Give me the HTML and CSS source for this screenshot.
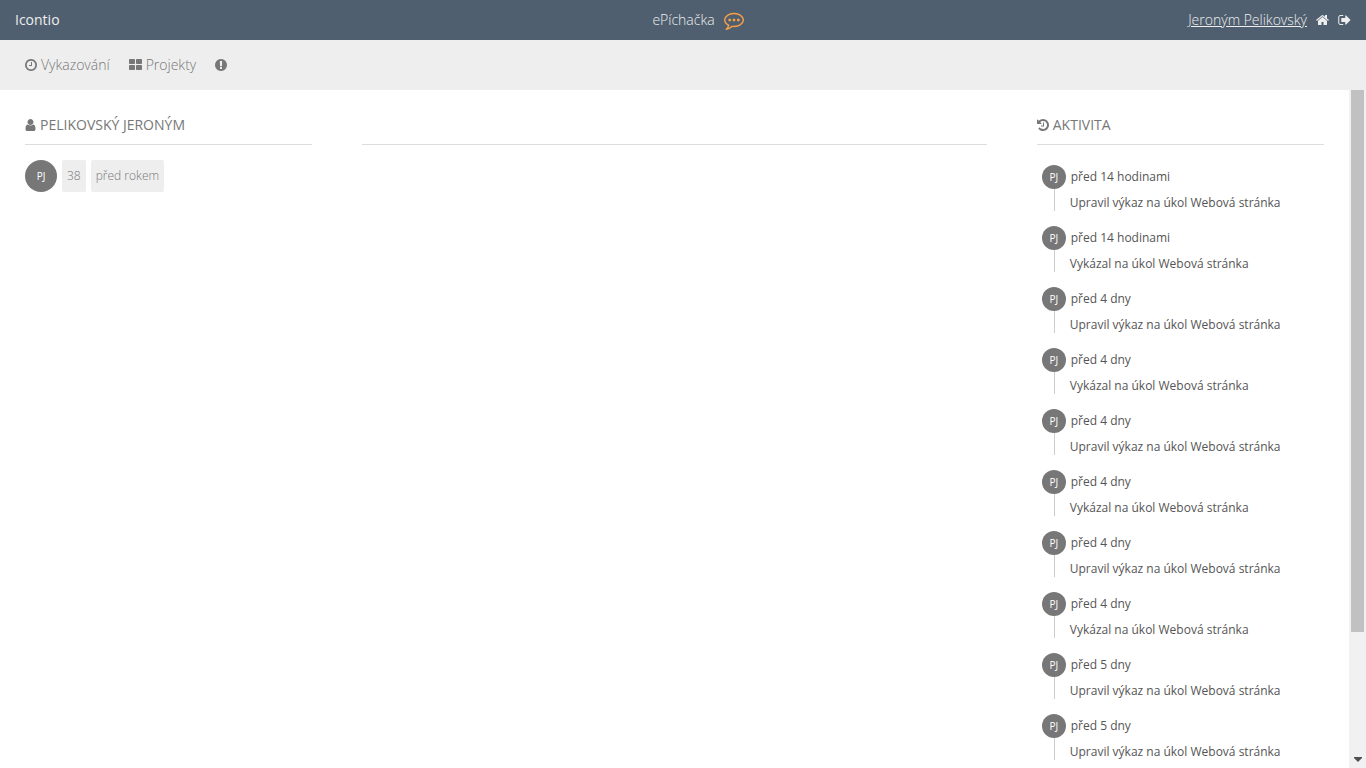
FILE: index.html
```html
<!DOCTYPE html>
<html lang="cs">
<head>
    <meta charset="UTF-8">
    <meta name="viewport" content="width=device-width, initial-scale=1.0">
    <title>ePíchačka</title>
    <link rel="stylesheet" href="styles.css">
</head>
<body>
    <header class="topbar">
        <a href="#" class="company">Icontio</a>
        <div class="brand">
            <span>ePíchačka</span>
            <svg class="brand-icon" viewBox="0 0 1792 1792"><path d="M640 896q0 53-37.500 90.500t-90.500 37.500-90.500-37.500-37.500-90.500 37.500-90.500 90.500-37.500 90.500 37.500 37.500 90.500zm384 0q0 53-37.500 90.500t-90.500 37.500-90.500-37.500-37.500-90.500 37.500-90.500 90.500-37.500 90.500 37.500 37.500 90.500zm384 0q0 53-37.500 90.500t-90.500 37.500-90.500-37.500-37.500-90.500 37.500-90.500 90.500-37.500 90.500 37.500 37.500 90.500zm-512-512q-204 0-381.500 69.500t-282 187.500-104.500 255q0 112 71.500 213.500t201.500 175.500l87 50-27 96q-24 91-70 172 152-63 275-171l43-38 57 6q69 8 130 8 204 0 381.500-69.500t282-187.500 104.500-255-104.500-255-282-187.500-381.500-69.500zm896 512q0 174-120 321.500t-326 233-450 85.500q-70 0-145-8-198 175-460 242-49 14-114 22h-5q-15 0-27-10.500t-16-27.500v-1q-3-4-.5-12t2-10 4.500-9.500l6-9 7-8.500 8-9q7-8 31-34.500t34.500-38 31-39.500 32.500-51 27-59 26-76q-157-89-247.500-220t-90.500-281q0-174 120-321.500t326-233 450-85.500 450 85.500 326 233 120 321.500z"/></svg>
        </div>
        <div class="account">
            <a href="#" class="account-name">Jeroným Pelikovský</a>
            <a href="#" class="account-link" aria-label="Domů"><svg class="icon icon-wide" viewBox="64 128 1664 1536"><path d="M1472 992v480q0 26-19 45t-45 19h-384v-384h-256v384h-384q-26 0-45-19t-19-45v-480q0-1 .5-3t.5-3l575-474 575 474q1 2 1 6zm223-69l-62 74q-8 9-21 11h-3q-13 0-21-7l-692-577-692 577q-12 8-24 7-13-2-21-11l-62-74q-8-10-7-23.500t11-21.500l719-599q32-26 76-26t76 26l244 204v-195q0-14 9-23t23-9h192q14 0 23 9t9 23v408l219 182q10 8 11 21.500t-7 23.500z"/></svg></a>
            <a href="#" class="account-link" aria-label="Odhlásit"><svg class="icon icon-wide" viewBox="32 128 1664 1536"><path d="M704 1440q0 4 1 20t.5 26.500-3 23.500-10 19.500-20.500 6.500h-320q-119 0-203.500-84.500t-84.500-203.500v-704q0-119 84.500-203.500t203.500-84.500h320q13 0 22.500 9.500t9.500 22.500q0 4 1 20t.5 26.500-3 23.500-10 19.500-20.500 6.500h-320q-66 0-113 47t-47 113v704q0 66 47 113t113 47h312l11.500 1 11.500 3 8 5.500 7 9 2 13.500zm928-544q0 26-19 45l-544 544q-19 19-45 19t-45-19-19-45v-288h-448q-26 0-45-19t-19-45v-384q0-26 19-45t45-19h448v-288q0-26 19-45t45-19 45 19l544 544q19 19 19 45z"/></svg></a>
        </div>
    </header>

    <nav class="menu">
        <a href="#" class="menu-item">
            <svg class="icon" viewBox="128 128 1536 1536"><path d="M1024 544v448q0 14-9 23t-23 9h-320q-14 0-23-9t-9-23v-64q0-14 9-23t23-9h224v-352q0-14 9-23t23-9h64q14 0 23 9t9 23zm416 352q0-148-73-273t-198-198-273-73-273 73-198 198-73 273 73 273 198 198 273 73 273-73 198-198 73-273zm224 0q0 209-103 385.500t-279.500 279.500-385.500 103-385.500-103-279.500-279.500-103-385.500 103-385.500 279.500-279.500 385.500-103 385.500 103 279.500 279.500 103 385.500z"/></svg>
            Vykazování
        </a>
        <a href="#" class="menu-item">
            <svg class="icon icon-wide" viewBox="64 128 1664 1536"><path d="M832 1024v384q0 52-38 90t-90 38h-512q-52 0-90-38t-38-90v-384q0-52 38-90t90-38h512q52 0 90 38t38 90zm0-768v384q0 52-38 90t-90 38h-512q-52 0-90-38t-38-90v-384q0-52 38-90t90-38h512q52 0 90 38t38 90zm896 768v384q0 52-38 90t-90 38h-512q-52 0-90-38t-38-90v-384q0-52 38-90t90-38h512q52 0 90 38t38 90zm0-768v384q0 52-38 90t-90 38h-512q-52 0-90-38t-38-90v-384q0-52 38-90t90-38h512q52 0 90 38t38 90z"/></svg>
            Projekty
        </a>
        <a href="#" class="menu-item" aria-label="Upozornění">
            <svg class="icon" viewBox="128 128 1536 1536"><path d="M896 128q209 0 385.500 103t279.500 279.500 103 385.500-103 385.500-279.500 279.500-385.500 103-385.500-103-279.500-279.500-103-385.500 103-385.500 279.500-279.500 385.500-103zm128 1247v-190q0-14-9-23.500t-22-9.500h-192q-13 0-23 10t-10 23v190q0 13 10 23t23 10h192q13 0 22-9.500t9-23.500zm-2-344l18-621q0-12-10-18-10-8-24-8h-220q-14 0-24 8-10 6-10 18l17 621q0 10 10 17.500t24 7.500h185q14 0 23.500-7.500t10.500-17.500z"/></svg>
        </a>
    </nav>

    <div class="page">
        <main class="columns">
            <section class="column">
                <h2 class="column-title">
                    <svg class="icon icon-narrow" viewBox="256 128 1280 1536"><path d="M1536 1399q0 109-62.500 187t-150.500 78h-854q-88 0-150.500-78t-62.500-187q0-85 8.500-160.500t31.500-152 58.500-131 94-89 134.500-34.500q131 128 313 128t313-128q76 0 134.500 34.500t94 89 58.500 131 31.500 152 8.500 160.500zm-256-887q0 159-112.500 271.500t-271.500 112.500-271.500-112.500-112.500-271.500 112.500-271.500 271.500-112.500 271.500 112.500 112.500 271.500z"/></svg>
                    Pelikovský Jeroným
                </h2>
                <div class="user-row">
                    <span class="avatar avatar-large">PJ</span>
                    <span class="tag">38</span>
                    <span class="tag">před rokem</span>
                </div>
            </section>

            <section class="column">
                <div class="column-title"></div>
            </section>

            <section class="column">
                <h2 class="column-title">
                    <svg class="icon" viewBox="128 128 1536 1536"><path d="M1664 896q0 156-61 298t-164 245-245 164-298 61q-172 0-327-72.500t-264-204.500q-7-10-6.500-22.500t8.500-20.500l137-138q10-9 25-9 16 2 23 12 73 95 179 147t225 52q104 0 198.500-40.500t163.500-109.500 109.500-163.500 40.500-198.500-40.500-198.500-109.500-163.500-163.500-109.500-198.500-40.500q-98 0-188 35.500t-160 101.500l137 138q31 30 14 69-17 40-59 40h-448q-26 0-45-19t-19-45v-448q0-42 40-59 39-17 69 14l130 129q107-101 244.500-156.500t284.500-55.500q156 0 298 61t245 164 164 245 61 298zm-640-288v448q0 14-9 23t-23 9h-320q-14 0-23-9t-9-23v-64q0-14 9-23t23-9h224v-352q0-14 9-23t23-9h64q14 0 23 9t9 23z"/></svg>
                    Aktivita
                </h2>
                <ul class="activity">
                    <li class="activity-item">
                        <div class="activity-head"><span class="avatar">PJ</span> před 14 hodinami</div>
                        <div class="activity-text">Upravil výkaz na úkol Webová stránka</div>
                    </li>
                    <li class="activity-item">
                        <div class="activity-head"><span class="avatar">PJ</span> před 14 hodinami</div>
                        <div class="activity-text">Vykázal na úkol Webová stránka</div>
                    </li>
                    <li class="activity-item">
                        <div class="activity-head"><span class="avatar">PJ</span> před 4 dny</div>
                        <div class="activity-text">Upravil výkaz na úkol Webová stránka</div>
                    </li>
                    <li class="activity-item">
                        <div class="activity-head"><span class="avatar">PJ</span> před 4 dny</div>
                        <div class="activity-text">Vykázal na úkol Webová stránka</div>
                    </li>
                    <li class="activity-item">
                        <div class="activity-head"><span class="avatar">PJ</span> před 4 dny</div>
                        <div class="activity-text">Upravil výkaz na úkol Webová stránka</div>
                    </li>
                    <li class="activity-item">
                        <div class="activity-head"><span class="avatar">PJ</span> před 4 dny</div>
                        <div class="activity-text">Vykázal na úkol Webová stránka</div>
                    </li>
                    <li class="activity-item">
                        <div class="activity-head"><span class="avatar">PJ</span> před 4 dny</div>
                        <div class="activity-text">Upravil výkaz na úkol Webová stránka</div>
                    </li>
                    <li class="activity-item">
                        <div class="activity-head"><span class="avatar">PJ</span> před 4 dny</div>
                        <div class="activity-text">Vykázal na úkol Webová stránka</div>
                    </li>
                    <li class="activity-item">
                        <div class="activity-head"><span class="avatar">PJ</span> před 5 dny</div>
                        <div class="activity-text">Upravil výkaz na úkol Webová stránka</div>
                    </li>
                    <li class="activity-item">
                        <div class="activity-head"><span class="avatar">PJ</span> před 5 dny</div>
                        <div class="activity-text">Upravil výkaz na úkol Webová stránka</div>
                    </li>
                </ul>
            </section>
        </main>

        <div class="scrollbar">
            <div class="scrollbar-thumb"></div>
            <svg class="scrollbar-arrow" viewBox="0 0 17 17"><path d="M5 6h8v1l-4 4-4-4z"/></svg>
        </div>
    </div>
</body>
</html>
```
FILE: styles.css
```css
* {
    box-sizing: border-box;
}
body {
    display: flex;
    flex-direction: column;
    height: 100vh;
    margin: 0;
    overflow: hidden;
    font-family: "Open Sans", sans-serif;
    font-size: 14px;
    line-height: 20px;
    color: #777;
    background: #fff;
}
a {
    color: inherit;
    text-decoration: none;
}
.icon {
    width: 12px;
    height: 12px;
    fill: currentColor;
    flex: none;
}
.icon-wide {
    width: 13px;
}
.icon-narrow {
    width: 11px;
}

/* top bar */
.topbar {
    display: grid;
    grid-template-columns: 1fr auto 1fr;
    align-items: center;
    flex: none;
    height: 40px;
    padding: 0 15px;
    color: #eee;
    background: #4f5f6f;
}
.company {
    font-weight: 500;
}
.brand {
    display: flex;
    align-items: center;
    gap: 9px;
    padding-left: 30px;
    font-weight: 300;
}
.brand-icon {
    width: 20px;
    height: 20px;
    fill: #fa9f47;
}
.account {
    display: flex;
    align-items: center;
    justify-content: flex-end;
    gap: 9px;
}
.account-name {
    font-weight: 300;
    text-decoration: underline;
}
.account-link {
    display: flex;
}

/* menu */
.menu {
    display: flex;
    align-items: center;
    gap: 19px;
    flex: none;
    height: 50px;
    padding: 0 25px;
    font-weight: 300;
    background: #eee;
}
.menu-item {
    display: flex;
    align-items: center;
    gap: 4px;
}

/* content */
.page {
    display: flex;
    flex: 1;
    min-height: 0;
}
.columns {
    display: grid;
    grid-template-columns: 1fr 2fr 1fr;
    align-items: start;
    flex: 1;
    overflow: hidden;
}
.column {
    padding: 20px 25px;
}
.column-title {
    display: flex;
    align-items: center;
    gap: 4px;
    height: 35px;
    margin: 0 0 15px;
    padding-bottom: 4px;
    border-bottom: 1px solid #ddd;
    font-size: 14px;
    font-weight: 400;
    text-transform: uppercase;
}
.user-row {
    display: flex;
    gap: 5px;
    font-size: 12px;
    font-weight: 300;
}
.avatar {
    display: flex;
    align-items: center;
    justify-content: center;
    width: 24px;
    height: 24px;
    border-radius: 50%;
    font-size: 10px;
    font-weight: 400;
    color: #fff;
    background: #777;
}
.avatar-large {
    width: 32px;
    height: 32px;
}
.tag {
    padding: 6px 5px;
    border-radius: 2px;
    background: #eee;
}

/* activity */
.activity {
    margin: 0;
    padding: 5px;
    list-style: none;
    font-size: 12px;
    color: #555;
}
.activity-item {
    margin-bottom: 15px;
}
.activity-head {
    display: flex;
    align-items: center;
    gap: 5px;
}
.activity-text {
    margin-left: 12px;
    padding: 6px 0 0 15px;
    border-left: 1px solid #ccc;
    line-height: 16px;
}

/* scrollbar */
.scrollbar {
    display: flex;
    flex-direction: column;
    justify-content: space-between;
    align-items: center;
    flex: none;
    width: 17px;
    background: #f1f1f1;
}
.scrollbar-thumb {
    width: 13px;
    height: 80%;
    background: #c1c1c1;
}
.scrollbar-arrow {
    width: 17px;
    height: 17px;
    fill: #505050;
}
```
